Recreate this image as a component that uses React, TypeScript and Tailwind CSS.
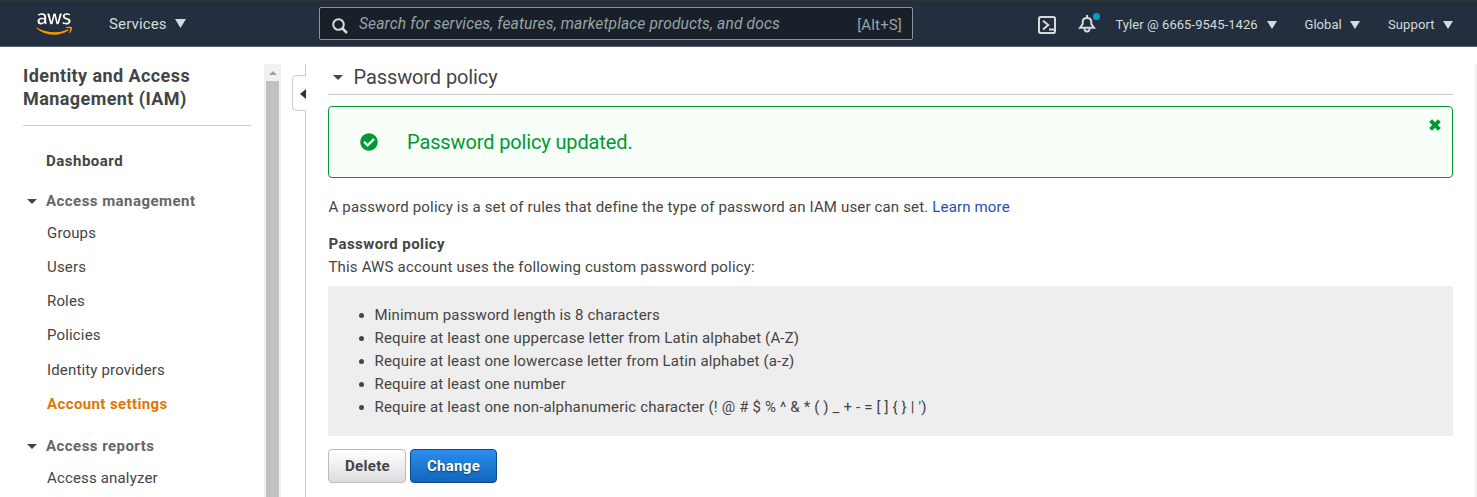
import type { ReactNode } from "react";
import { FaAws, FaCheckCircle } from "react-icons/fa";

function Caret({ className = "" }: { className?: string }) {
  return (
    <svg viewBox="0 0 10 5" className={`h-[5px] w-[10px] shrink-0 ${className}`}>
      <path d="M0 0H10L5 5Z" fill="#444" />
    </svg>
  );
}

function MenuCaret({ className }: { className: string }) {
  return (
    <svg viewBox="0 0 11 9" preserveAspectRatio="none" className={`shrink-0 ${className}`}>
      <path d="M0 0H11L5.5 9Z" fill="#d5dbdb" />
    </svg>
  );
}

function Header() {
  return (
    <header className="flex h-[47px] shrink-0 items-center border-t border-b border-t-[#333] border-b-[#5b6570] bg-[#232f3e] text-[#d5dbdb]">
      <svg className="h-0 w-0">
        <linearGradient id="awsFill" gradientUnits="userSpaceOnUse" x1="0" y1="0" x2="0" y2="512">
          <stop offset="0.585" stopColor="#fff" />
          <stop offset="0.585" stopColor="#f90" />
        </linearGradient>
      </svg>
      <FaAws className="ml-[36px] h-[30px] w-[36px] fill-[url(#awsFill)]" />
      <span className="mt-px ml-[37px] w-[66px] text-[15px] tracking-[0.15px] whitespace-nowrap">Services</span>
      <MenuCaret className="h-[9px] w-[11px]" />
      <div className="ml-[133px] flex h-[33px] w-[594px] items-center rounded-[2px] border border-[#879596] bg-[#1a202a] pr-[10px] pl-3 text-[#95a5a6]">
        <svg viewBox="0 0 16 16" className="mt-[5px] size-4" fill="none" stroke="#d5dbdb">
          <circle cx="6.500" cy="6.500" r="5.300" strokeWidth="2" />
          <path d="M10.500 10.500L15 15" strokeWidth="2.500" />
        </svg>
        <span className="mt-[3px] ml-[11px] text-[15.600px] tracking-[0.12px] whitespace-nowrap italic">
          Search for services, features, marketplace products, and docs
        </span>
        <span className="mt-[3px] ml-auto text-[15px] tracking-[0.15px]">[Alt+S]</span>
      </div>
      <svg viewBox="0 0 18 18" className="mt-[2px] ml-[125px] size-[18px] shrink-0" fill="none" stroke="#d5dbdb" strokeWidth="2">
        <rect x="1" y="1" width="16" height="16" rx="1.8" />
        <path d="M5 4.800L10.200 9L5 13.500M11 13.500H16" />
      </svg>
      <div className="relative ml-[22px] h-[20px] w-[19px] shrink-0">
        <svg viewBox="0 0 18 20" className="h-[20px] w-[18px]" fill="none" stroke="#d5dbdb" strokeWidth="2">
          <path d="M9 1V3.500M4.700 10V8C4.700 5.500 6.500 3.900 9 3.900S13.300 5.500 13.300 8V10L16 13.800H2Z" />
          <path d="M6.500 14.500C6.500 18.600 11.500 18.600 11.500 14.500" />
        </svg>
        <span className="absolute -top-px left-[15px] size-[7px] rounded-full bg-[#00a1c9]" />
      </div>
      <span className="mt-[3px] ml-[18.500px] w-[151.500px] text-[13px] tracking-[0.06px] whitespace-nowrap">
        Tyler @ 6665-9545-1426
      </span>
      <MenuCaret className="mt-[3px] h-[8px] w-[10px]" />
      <span className="mt-[3px] ml-[27.500px] w-[45.500px] text-[13px] tracking-[0.05px]">Global</span>
      <MenuCaret className="mt-[3px] h-[8px] w-[10px]" />
      <span className="mt-[3px] ml-[28px] w-[55px] text-[13px] tracking-[0.1px]">Support</span>
      <MenuCaret className="mt-[3px] h-[8px] w-[10px]" />
    </header>
  );
}

function NavGroup({ label }: { label: string }) {
  return (
    <div className="-ml-[19px] flex h-[30px] items-center gap-[9px] font-bold tracking-[0.46px] text-[#666]">
      <Caret className="mt-px" />
      <span>{label}</span>
    </div>
  );
}

function NavItem({ children, active = false }: { children: ReactNode; active?: boolean }) {
  return (
    <div
      className={`flex h-[34.2px] items-center pl-px ${active ? "font-bold tracking-[0.39px] text-[#e07700]" : "tracking-[0.16px]"}`}
    >
      {children}
    </div>
  );
}

function Sidebar() {
  return (
    <aside className="flex w-[264px] shrink-0 flex-col pl-[23px]">
      <h1 className="w-[228px] border-b border-[#ccc] pb-[15px] text-[18px] leading-[23px] font-bold tracking-[0.42px]">
        Identity and Access Management (IAM)
      </h1>
      <nav className="ml-[23px] text-[15px] whitespace-nowrap">
        <div className="mt-[20px] flex h-[30px] items-center font-bold tracking-[0.5px]">Dashboard</div>
        <div className="mt-[10px]">
          <NavGroup label="Access management" />
          <NavItem>Groups</NavItem>
          <NavItem>Users</NavItem>
          <NavItem>Roles</NavItem>
          <NavItem>Policies</NavItem>
          <NavItem>Identity providers</NavItem>
          <NavItem active>Account settings</NavItem>
        </div>
        <div className="mt-[10px]">
          <NavGroup label="Access reports" />
          <NavItem>Access analyzer</NavItem>
        </div>
      </nav>
    </aside>
  );
}

function Scrollbar() {
  return (
    <div className="flex w-[17px] shrink-0 flex-col items-center bg-[#f1f1f1]">
      <div className="flex h-[17px] items-center">
        <svg viewBox="0 0 8 4" className="h-[4px] w-[8px]">
          <path d="M0 4L4 0L8 4Z" fill="#a3a3a3" />
        </svg>
      </div>
      <div className="w-[13px] grow bg-[#c1c1c1]" />
    </div>
  );
}

function Divider() {
  return (
    <div className="ml-[11px] flex w-[14px] shrink-0 flex-col items-end">
      <div className="h-[11px] w-px bg-[#ccc]" />
      <div className="flex h-[36px] w-[14px] items-center justify-end rounded-l-[5px] border border-r-0 border-[#ccc]">
        <svg viewBox="0 0 6 10" className="mt-[2px] h-[10px] w-[6px]">
          <path d="M6 0V10L0 5Z" fill="#333" />
        </svg>
      </div>
      <div className="w-px grow bg-[#ccc]" />
    </div>
  );
}

const rules = [
  "Minimum password length is 8 characters",
  "Require at least one uppercase letter from Latin alphabet (A-Z)",
  "Require at least one lowercase letter from Latin alphabet (a-z)",
  "Require at least one number",
  "Require at least one non-alphanumeric character (! @ # $ % ^ & * ( ) _ + - = [ ] { } | ')",
];

function Content() {
  return (
    <main className="ml-[22px] flex w-[1125px] shrink-0 flex-col text-[15px] leading-[23px] tracking-[0.17px]">
      <h2 className="flex h-[31px] items-center border-b border-[#ccc] pb-[3px] pl-[5px] text-[20px] tracking-[-0.1px]">
        <Caret className="mr-[10.500px]" />
        Password policy
      </h2>
      <div className="mt-[11px] flex h-[72px] items-center rounded-[4px] border border-[#093] bg-[#f7fff8] pr-[11px] pl-[31px] text-[#093]">
        <FaCheckCircle className="size-[18px]" />
        <span className="ml-[29px] text-[20px] tracking-[-0.13px]">Password policy updated.</span>
        <svg viewBox="0 0 12 12" className="mt-3 ml-auto size-3 self-start" stroke="#093" strokeWidth="4">
          <path d="M1.600 1.600L10.400 10.400M10.400 1.600L1.600 10.400" />
        </svg>
      </div>
      <p className="mt-[18px] pl-[0.5px] tracking-[0.16px]">
        A password policy is a set of rules that define the type of password an IAM user can set.{" "}
        <a className="text-[#1e4fb5]">Learn more</a>
      </p>
      <h3 className="mt-[14px] pl-[0.5px] font-bold tracking-[0.42px]">Password policy</h3>
      <p className="pl-[0.5px]">This AWS account uses the following custom password policy:</p>
      <ul className="mt-[7px] flex h-[150px] list-disc flex-col bg-[#eee] pt-[18px] pl-[46.500px] tracking-[0.16px]">
        {rules.map((rule) => (
          <li key={rule}>{rule}</li>
        ))}
      </ul>
      <div className="mt-[13px] flex gap-1 font-bold tracking-[0.3px]">
        <button className="h-[34px] w-[78px] rounded-[4px] border border-[#bbb] bg-linear-to-b from-white to-[#ddd] pt-px pl-px">
          Delete
        </button>
        <button className="h-[34px] w-[87px] rounded-[4px] border border-[#0a4a8c] bg-linear-to-b from-[#2b8eef] to-[#1166bb] pt-px text-white [text-shadow:0_1px_2px_#0008]">
          Change
        </button>
      </div>
    </main>
  );
}

export default function App() {
  return (
    <div className="flex h-[497px] w-[1477px] flex-col overflow-hidden bg-white font-['Roboto',sans-serif] text-[#444]">
      <Header />
      <div className="flex min-h-0 grow pt-[17px]">
        <Sidebar />
        <Scrollbar />
        <Divider />
        <Content />
        <div className="ml-auto w-[2px] bg-[#f1f1f1]" />
      </div>
    </div>
  );
}
